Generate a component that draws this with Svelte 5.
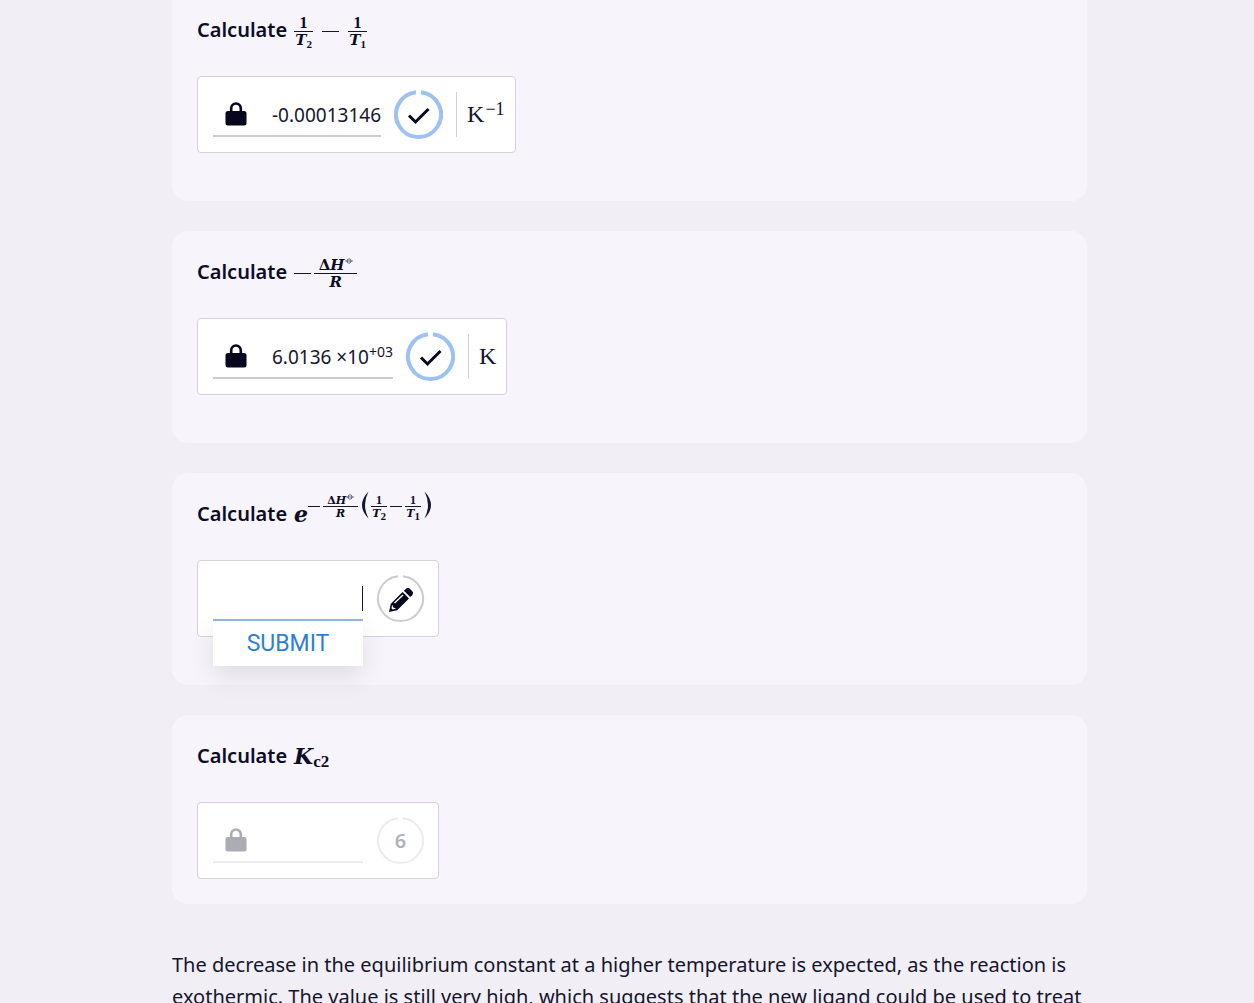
<script lang="ts">
  type Status = 'done' | 'active' | 'locked';

  interface Step {
    id: string;
    status: Status;
    value?: string;
    exponent?: string;
    unit?: string;
    unitPower?: string;
    index?: number;
  }

  const steps: Step[] = [
    { id: 'temperature', status: 'done', value: '-0.00013146', unit: 'K', unitPower: '−1' },
    { id: 'enthalpy', status: 'done', value: '6.0136 ×10', exponent: '+03', unit: 'K' },
    { id: 'exponential', status: 'active' },
    { id: 'constant', status: 'locked', index: 6 }
  ];

  let answer = $state('');
</script>

<svelte:head>
  <title>Equilibrium constant</title>
</svelte:head>

{#snippet overT(n: string)}
  <span class="frac narrow">
    <span class="num">1</span>
    <span class="den"><i>T</i><span class="sub">{n}</span></span>
  </span>
{/snippet}

{#snippet enthalpyOverR()}
  <span class="frac wide">
    <span class="num"><b>Δ</b><i>H</i><svg class="standard" viewBox="0 0 8 6" aria-hidden="true">
        <ellipse cx="4" cy="3" rx="2" ry="2.2" />
        <path d="M0 3h8" />
      </svg></span>
    <span class="den"><i>R</i></span>
  </span>
{/snippet}

{#snippet lock()}
  <svg class="lock" viewBox="0 0 22 24" aria-hidden="true">
    <path class="shackle" d="M6.2 11V6.300a4.800 4.800 0 0 1 9.600 0V11" />
    <rect x="0.5" y="9" width="21" height="14.5" rx="2.5" />
  </svg>
{/snippet}

<main>
  {#each steps as step (step.id)}
    <section class="card {step.status}">
      <h2>
        <label for={step.id}>Calculate</label>
        {#if step.id === 'temperature'}
          <span class="math">{@render overT('2')}<span class="minus spaced"></span>{@render overT('1')}</span>
        {:else if step.id === 'enthalpy'}
          <span class="math"><span class="minus"></span>{@render enthalpyOverR()}</span>
        {:else if step.id === 'exponential'}
          <span class="math">
            <i class="base">e</i>
            <span class="power">
              <span class="minus"></span>{@render enthalpyOverR()}
              <svg class="paren" viewBox="0 0 8 28" aria-hidden="true"><path d="M7.500 0.500Q-5.500 14 7.500 27.500Q0.500 14 7.500 0.500Z" /></svg>
              {@render overT('2')}<span class="minus"></span>{@render overT('1')}
              <svg class="paren" viewBox="0 0 8 28" aria-hidden="true"><path d="M0.500 0.500Q13.500 14 0.500 27.500Q7.500 14 0.500 0.500Z" /></svg>
            </span>
          </span>
        {:else}
          <span class="math"><i class="base">K</i><span class="sub">c2</span></span>
        {/if}
      </h2>

      <div class="answer">
        <div class="field">
          {#if step.status === 'active'}
            <input id={step.id} type="text" autocomplete="off" bind:value={answer} />
            {#if answer === ''}<span class="caret"></span>{/if}
            <button class="submit" type="button">SUBMIT</button>
          {:else}
            {@render lock()}
            <output id={step.id}>{step.value ?? ''}{#if step.exponent}<sup>{step.exponent}</sup>{/if}</output>
          {/if}
        </div>

        <div class="badge">
          <svg class="ring" viewBox="0 0 49 49" aria-hidden="true">
            <path d="M27 2.14a22.5 22.5 0 1 1-5 0" />
          </svg>
          {#if step.status === 'done'}
            <svg class="icon" viewBox="0 0 24 24" aria-hidden="true">
              <path class="tick" d="M2 12.5l6.5 6.500L21.500 6" />
            </svg>
          {:else if step.status === 'active'}
            <svg class="icon pencil" viewBox="0 0 24 24" aria-hidden="true">
              <path d="M0 24l1.8-8.2L13.6 4l6.4 6.4L8.2 22.2z" />
              <path d="M14.9 2.8l1.9-1.9a3 3 0 0 1 4.2 0L23.1 3a3 3 0 0 1 0 4.2l-1.9 1.9z" />
              <path class="cut" d="M5.5 15l8.500-8" />
              <path class="nib" d="M3.200 16.800l1 2.800 3 1-3.400 1-1.400-1.400z" />
            </svg>
          {:else}
            <span>{step.index}</span>
          {/if}
        </div>

        {#if step.unit}
          <div class="unit">{step.unit}{#if step.unitPower}<sup>{step.unitPower}</sup>{/if}</div>
        {/if}
      </div>
    </section>
  {/each}

  <p>
    The decrease in the equilibrium constant at a higher temperature is expected, as the reaction is
    exothermic. The value is still very high, which suggests that the new ligand could be used to treat
  </p>
</main>

<style>
  :global(body) {
    background: #f1eef6;
    color: #15152f;
    font-family: "Noto Sans", sans-serif;
    overflow: hidden;
  }

  main {
    margin: -11px 167px 0 172px;
  }

  .card {
    box-sizing: border-box;
    margin-bottom: 30px;
    padding: 25px 25px 48px;
    border-radius: 16px;
    background: #f7f4fc;
  }

  .card.locked {
    margin-bottom: 45px;
    padding-bottom: 25px;
  }

  h2 {
    display: flex;
    align-items: center;
    gap: 7px;
    height: 32px;
    margin: 0 0 30px;
    color: #0c0c26;
    font-size: 20px;
    font-weight: 600;
    line-height: 32px;
  }

  .math {
    display: flex;
    align-items: center;
    font: bold 24px/24px "Liberation Serif", serif;
  }

  .math i,
  .math b {
    font-family: "DejaVu Serif", serif;
    font-size: 15px;
    line-height: 1;
  }

  .frac {
    display: flex;
    flex-direction: column;
    align-items: center;
    margin-top: 2px;
    font-size: 16px;
    line-height: 16px;
  }

  .frac.narrow {
    width: 19px;
  }

  .frac.wide {
    width: 43px;
  }

  .num,
  .den {
    height: 16px;
    white-space: nowrap;
  }

  .den {
    width: 100%;
    border-top: 1px solid #15152f;
    text-align: center;
  }

  .den .sub {
    font-size: 11px;
    line-height: 8px;
    vertical-align: -3px;
  }

  .standard {
    width: 8px;
    height: 6px;
    vertical-align: 6px;
    fill: none;
    stroke: #15152f;
    stroke-width: 0.6;
  }

  .minus {
    width: 17px;
    height: 1px;
    margin: 3px 3px 0 0;
    background: #15152f;
  }

  .minus.spaced {
    margin: 3px 9px 0;
  }

  .power {
    display: flex;
    align-items: center;
    margin: 0 0 18px;
  }

  .power .frac {
    font-size: 12px;
    line-height: 12px;
  }

  .power .num,
  .power .den {
    height: 12px;
  }

  .power i,
  .power b {
    font-size: 11px;
  }

  .power .standard {
    vertical-align: 4px;
  }

  .power .narrow {
    width: 16px;
  }

  .power .wide {
    width: 35px;
  }

  .power .minus {
    width: 12px;
    margin: 2px 3px 0;
  }

  .power .minus:first-child {
    margin-left: 0;
  }

  .paren {
    width: 8px;
    height: 28px;
    margin: 0 2px 0 3px;
    fill: #15152f;
  }

  .math .base {
    font-size: 22px;
  }

  .base + .sub {
    margin-top: 12px;
    font-size: 17px;
  }

  .answer {
    display: flex;
    align-items: center;
    box-sizing: border-box;
    width: fit-content;
    padding: 13px 13px 13px 15px;
    border: 1px solid #d5d1da;
    border-radius: 4px;
    background: #fff;
  }

  .done .answer {
    padding-right: 10px;
  }

  .field {
    position: relative;
    display: flex;
    align-items: center;
    justify-content: space-between;
    box-sizing: border-box;
    min-width: 150px;
    height: 45px;
    margin-right: 13px;
    border-bottom: 2px solid #ccc;
    font-size: 19px;
  }

  .active .field {
    border-color: #94b8e2;
  }

  .locked .field {
    border-color: #ececee;
  }

  .lock {
    width: 22px;
    height: 24px;
    margin: 0 25px 0 12px;
    fill: #06061f;
  }

  .shackle {
    fill: none;
    stroke: #06061f;
    stroke-width: 2.6;
  }

  .locked .lock {
    opacity: 0.33;
  }

  output {
    padding-top: 2px;
  }

  output sup {
    font-size: 14px;
    line-height: 14px;
  }

  input {
    box-sizing: border-box;
    width: 150px;
    height: 43px;
    padding: 0;
    border: 0;
    outline: 0;
    background: transparent;
    color: inherit;
    font: inherit;
    text-align: right;
  }

  .caret {
    position: absolute;
    top: 10px;
    right: 0;
    width: 1px;
    height: 25px;
    background: #15152f;
  }

  .submit {
    position: absolute;
    top: 45px;
    left: 0;
    width: 100%;
    height: 45px;
    padding: 0;
    border: 0;
    background: #fff;
    box-shadow: 0 10px 26px rgba(0, 0, 0, 0.1);
    color: #2c7fd6;
    font: 23px/45px Roboto, sans-serif;
    cursor: pointer;
  }

  .badge {
    display: grid;
    place-items: center;
    width: 49px;
    height: 49px;
    color: #b1b1b8;
    font-size: 20px;
    font-weight: 600;
  }

  .badge > * {
    grid-area: 1 / 1;
  }

  .ring {
    width: 49px;
    height: 49px;
    fill: none;
    stroke: #ccc;
    stroke-width: 2;
  }

  .done .ring {
    stroke: #9dc1f5;
    stroke-width: 4;
  }

  .locked .ring {
    stroke: #ececee;
  }

  .icon {
    width: 24px;
    height: 24px;
    fill: #06061f;
  }

  .pencil {
    margin-top: 2px;
  }

  .tick {
    fill: none;
    stroke: #06061f;
    stroke-width: 3;
  }

  .cut {
    fill: none;
    stroke: #fff;
    stroke-width: 1.4;
  }

  .nib {
    fill: #fff;
  }

  .unit {
    box-sizing: border-box;
    height: 45px;
    margin-left: 13px;
    padding-left: 10px;
    border-left: 1px solid #d5d1da;
    font: 24px/45px "Liberation Serif", serif;
  }

  .unit sup {
    margin-left: 1px;
    font-size: 18px;
    line-height: 18px;
    vertical-align: 7px;
  }

  p {
    margin: 0;
    font-size: 20px;
    line-height: 32px;
  }
</style>
